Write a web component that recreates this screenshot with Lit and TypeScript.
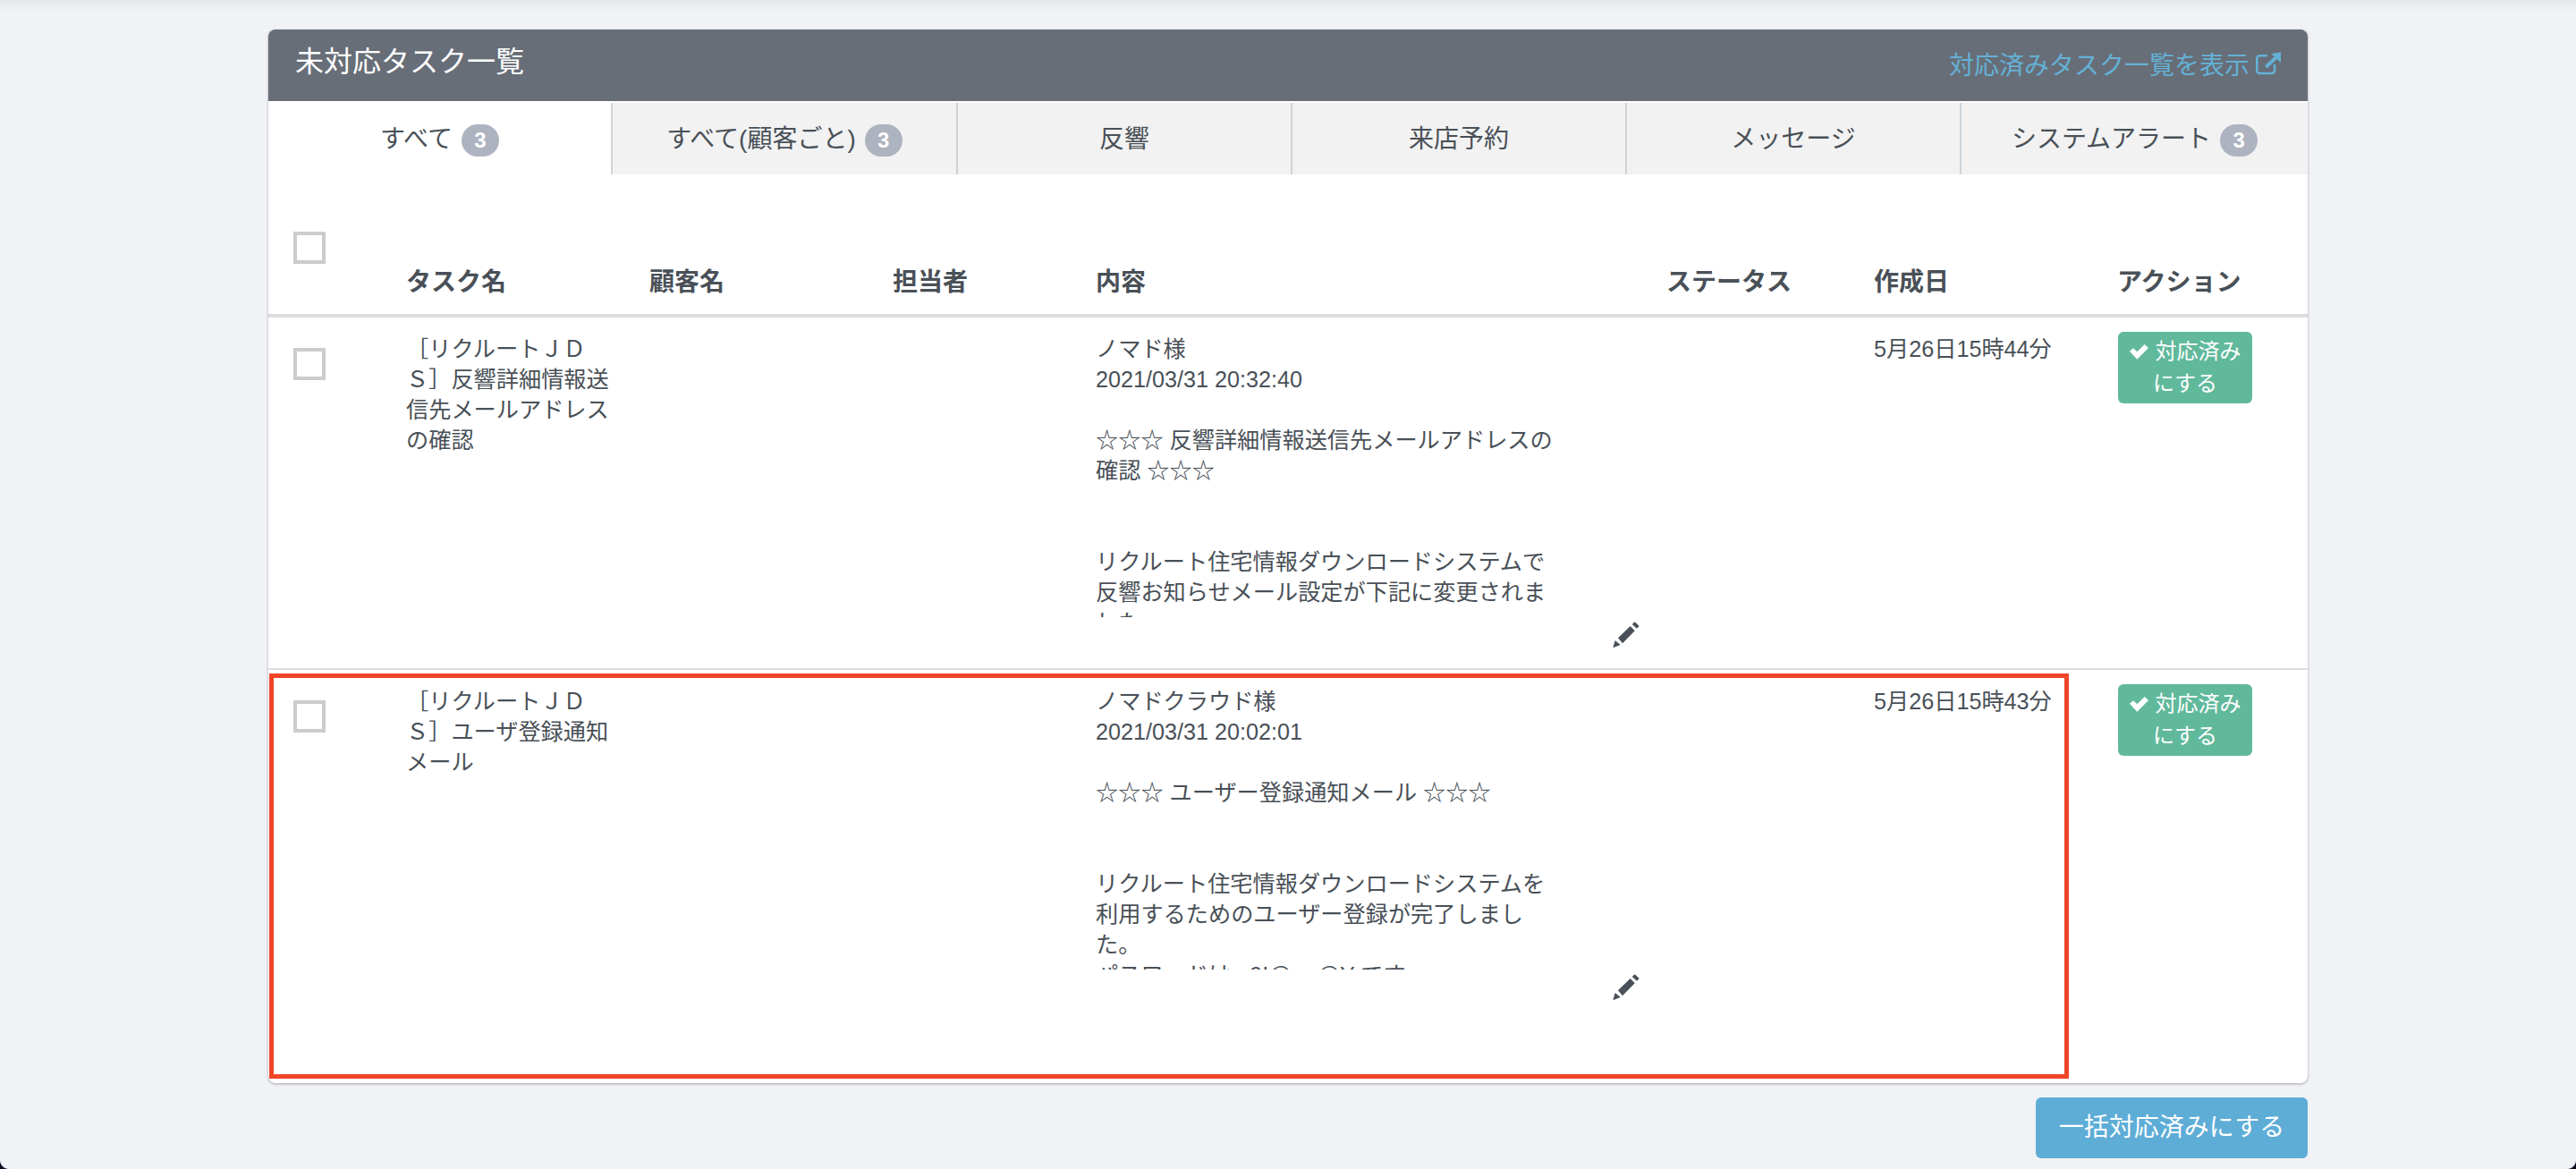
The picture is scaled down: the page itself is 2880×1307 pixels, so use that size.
import { LitElement, html, css, svg } from "lit";
import { customElement } from "lit/decorators.js";

const tabs = [
  { label: "すべて", badge: 3, active: true },
  { label: "すべて(顧客ごと)", badge: 3 },
  { label: "反響" },
  { label: "来店予約" },
  { label: "メッセージ" },
  { label: "システムアラート", badge: 3 },
];

const columns = ["タスク名", "顧客名", "担当者", "内容", "ステータス", "作成日", "アクション"];

const rows = [
  {
    name: "［リクルートＪＤ\nＳ］反響詳細情報送\n信先メールアドレス\nの確認",
    body: "ノマド様\n2021/03/31 20:32:40\n\n☆☆☆ 反響詳細情報送信先メールアドレスの\n確認 ☆☆☆\n\n\nリクルート住宅情報ダウンロードシステムで\n反響お知らせメール設定が下記に変更されま\nした。",
    date: "5月26日15時44分",
  },
  {
    name: "［リクルートＪＤ\nＳ］ユーザ登録通知\nメール",
    body: "ノマドクラウド様\n2021/03/31 20:02:01\n\n☆☆☆ ユーザー登録通知メール ☆☆☆\n\n\nリクルート住宅情報ダウンロードシステムを\n利用するためのユーザー登録が完了しまし\nた。\nパスワードは e9!@_+@Y です",
    date: "5月26日15時43分",
    tall: true,
  },
];

const pencil = svg`
  <polygon points="-0.7,29.3 1.7,21 7.7,26" />
  <polygon points="18.7,5 23.7,10.3 10,24.3 5,18.3" />
  <polygon points="20.7,3 23.7,0.3 28.7,5 26,7.7" />
`;
const check = svg`<polygon points="0,7.7 4,4.3 8.3,8.3 16.7,0 21,4 8.3,16.7" />`;

@customElement("app-root")
export class AppRoot extends LitElement {
  static styles = css`
    :host {
      display: block;
      position: relative;
      height: 1307px;
      overflow: hidden;
      background: #f0f2f6;
      color: #495057;
      font-family: "Liberation Sans", "Noto Sans CJK JP", sans-serif;
    }
    .top-shade {
      position: absolute;
      inset: 0 0 auto 0;
      height: 12px;
      background: linear-gradient(#e3e5e9, #f0f2f6);
    }
    .corner {
      position: absolute;
      bottom: 0;
      width: 10px;
      height: 10px;
    }
    .corner.left {
      left: 0;
      background: radial-gradient(circle at 100% 0, transparent 9.5px, #0b1020 10.5px);
    }
    .corner.right {
      right: 0;
      background: radial-gradient(circle at 0 0, transparent 9.5px, #0b1020 10.5px);
    }
    .page {
      position: relative;
      width: 2280px;
      margin: 0 auto;
      padding-top: 33px;
      display: flex;
      flex-direction: column;
    }
    .card {
      height: 1178px;
      display: flex;
      flex-direction: column;
      background: #fff;
      border-radius: 8px;
      box-shadow: 0 1px 3px rgba(60, 64, 80, 0.45);
      overflow: hidden;
    }
    .head {
      height: 80px;
      flex: none;
      display: flex;
      justify-content: space-between;
      background: #676e78;
      padding: 0 29px 0 30px;
    }
    .title {
      color: #fff;
      font-size: 32px;
      line-height: 72px;
    }
    .link {
      display: flex;
      align-items: center;
      gap: 7px;
      height: 76px;
      color: #64b1d6;
      font-size: 28px;
    }
    .link svg {
      width: 29px;
      height: 26px;
      margin-top: 2px;
      overflow: visible;
      fill: none;
      stroke: #64b1d6;
      stroke-width: 2.6;
    }
    .link svg polygon {
      fill: #64b1d6;
      stroke: none;
    }
    .tabs {
      flex: none;
      margin-top: 2px;
      height: 80px;
      display: grid;
      grid-template-columns: 385px 386px 374px 374px 374px 387px;
    }
    .tab {
      display: flex;
      align-items: center;
      justify-content: center;
      gap: 10px;
      font-size: 28px;
      padding-bottom: 4px;
      background: #f2f2f2;
      border-right: 2px solid #ced4da;
      box-sizing: border-box;
    }
    .tab:last-child {
      border-right: none;
    }
    .tab.active {
      background: #fff;
    }
    .badge {
      width: 42px;
      height: 36px;
      border-radius: 18px;
      background: #adb3bf;
      color: #fff;
      font-size: 24px;
      font-weight: 700;
      line-height: 36px;
      text-align: center;
      margin-top: 8px;
    }
    .row {
      display: grid;
      grid-template-columns: 154px 272px 272px 227px 638px 232px 272px 213px;
      box-sizing: border-box;
    }
    .row.thead {
      height: 160px;
      flex: none;
      border-bottom: 4px solid #ddd;
      align-items: end;
      font-size: 28px;
      font-weight: 700;
    }
    .thead span {
      padding-bottom: 15px;
      line-height: 40px;
      white-space: nowrap;
    }
    .thead .box {
      align-self: start;
      margin-top: 64px;
    }
    .row.item {
      height: 394px;
      border-bottom: 2px solid #ddd;
      font-size: 25.2px;
      line-height: 34px;
    }
    .row.item.tall {
      height: 462px;
      border-bottom: none;
    }
    .box {
      width: 36px;
      height: 36px;
      margin-left: 28px;
      margin-top: 34px;
      box-sizing: border-box;
      border: 4px solid #ccc;
      background: #fff;
    }
    .cell {
      padding-top: 17.5px;
    }
    .name {
      white-space: pre-line;
    }
    .date {
      white-space: nowrap;
    }
    .body {
      height: 317.5px;
      overflow: hidden;
      white-space: pre-line;
    }
    .edit {
      display: block;
      width: 29px;
      height: 29px;
      margin: 4.5px 0 0 579px;
      overflow: visible;
      fill: #495057;
    }
    .done {
      width: 150px;
      height: 80px;
      margin-top: 16px;
      margin-left: 1px;
      box-sizing: border-box;
      padding-top: 4px;
      border-radius: 6px;
      background: #61b99c;
      color: #fff;
      font-size: 24px;
      line-height: 36px;
      text-align: center;
    }
    .done svg {
      width: 21px;
      height: 17px;
      margin-right: 8px;
      vertical-align: -1px;
      fill: #fff;
    }
    .footer {
      display: flex;
      justify-content: flex-end;
      margin-top: 16px;
    }
    .bulk {
      width: 304px;
      height: 68px;
      border-radius: 6px;
      background: #5eadd7;
      color: #fff;
      font-size: 28px;
      line-height: 68px;
      text-align: center;
    }
    .mark {
      position: absolute;
      left: 1px;
      top: 753px;
      width: 2012px;
      height: 453px;
      box-sizing: border-box;
      border: 5.5px solid #f04527;
    }
  `;

  render() {
    return html`
      <div class="top-shade"></div>
      <div class="page">
        <div class="card">
          <div class="head">
            <div class="title">未対応タスク一覧</div>
            <div class="link">
              対応済みタスク一覧を表示
              <svg viewBox="0 0 29 26">
                <path d="M21 13v7a3 3 0 0 1-3 3H4.3a3 3 0 0 1-3-3V6.3a3 3 0 0 1 3-3H13" />
                <path d="M11.3 16 23 5" stroke-width="4" />
                <polygon points="17.3,1 28,-0.7 28,11" />
              </svg>
            </div>
          </div>
          <div class="tabs">
            ${tabs.map(
              (t) => html`<div class="tab ${t.active ? "active" : ""}">
                <span>${t.label}</span>
                ${t.badge ? html`<span class="badge">${t.badge}</span>` : ""}
              </div>`
            )}
          </div>
          <div class="row thead">
            <div class="box"></div>
            ${columns.map((c) => html`<span>${c}</span>`)}
          </div>
          ${rows.map(
            (r) => html`<div class="row item ${r.tall ? "tall" : ""}">
              <div class="box"></div>
              <div class="cell name">${r.name}</div>
              <div></div>
              <div></div>
              <div class="cell">
                <div class="body">${r.body}</div>
                <svg class="edit" viewBox="0 0 29 29">${pencil}</svg>
              </div>
              <div></div>
              <div class="cell date">${r.date}</div>
              <div>
                <div class="done">
                  <svg viewBox="0 0 21 17">${check}</svg>対応済み<br />にする
                </div>
              </div>
            </div>`
          )}
        </div>
        <div class="footer"><div class="bulk">一括対応済みにする</div></div>
        <div class="mark"></div>
      </div>
      <div class="corner left"></div>
      <div class="corner right"></div>
    `;
  }
}
